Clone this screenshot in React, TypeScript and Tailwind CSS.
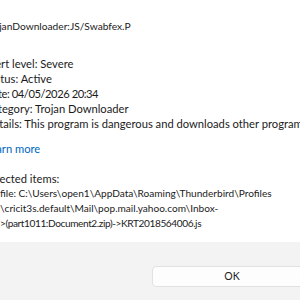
export default function App() {
  return (
    <div className="w-[300px] h-[300px] overflow-hidden bg-white flex flex-col text-[#1b1b1b] font-['Lato',sans-serif]">
      <div className="flex-1 whitespace-nowrap">
        <div className="ml-[-15px] pt-[18px] leading-[16px] text-[10.2px]">TrojanDownloader:JS/Swabfex.P</div>
        <div className="ml-[-15px] mt-[22px] leading-[15px] text-[11.2px]">
          <div>Alert level: Severe</div>
          <div>Status: Active</div>
          <div className="tracking-[-0.45px]">Date: 04/05/2026 20:34</div>
          <div>Category: Trojan Downloader</div>
          <div>Details: This program is dangerous and downloads other programs to your device.</div>
          <div className="mt-[10px] text-[#0067c0]">Learn more</div>
          <div className="mt-[15px]">Affected items:</div>
          <div className="pl-[15px] text-[10.1px]">
            <div>file: C:\Users\open1\AppData\Roaming\Thunderbird\Profiles</div>
            <div>\cricit3s.default\Mail\pop.mail.yahoo.com\Inbox-</div>
            <div className="tracking-[-0.4px]">&gt;(part1011:Document2.zip)-&gt;KRT2018564006.js</div>
          </div>
        </div>
      </div>
      <div className="h-[58px] bg-[#f3f3f3] pt-[20px] pl-[152px] shrink-0">
        <button className="w-[180px] h-[21px] bg-[#fdfdfd] border border-[#e1e1e1] rounded-[4px] text-[10.5px] text-[#1b1b1b] leading-none pr-[20px]">
          OK
        </button>
      </div>
    </div>
  );
}
